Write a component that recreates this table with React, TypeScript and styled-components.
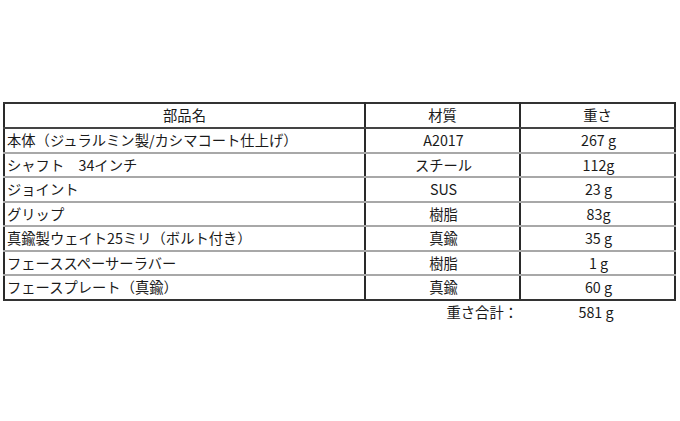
import React from "react";
import styled, { createGlobalStyle } from "styled-components";

const GlobalStyle = createGlobalStyle`
  html, body {
    margin: 0;
    padding: 0;
    background: #ffffff;
  }
  body {
    font-family: "Noto Sans CJK JP", "Noto Sans", sans-serif;
    color: #1a1a1a;
  }
`;

const Page = styled.div`
  width: 680px;
  height: 421px;
  box-sizing: border-box;
  padding: 102px 0 0 3px;
`;

const Table = styled.table`
  width: 671px;
  border-collapse: collapse;
  table-layout: fixed;
  font-size: 14.3px;
`;

const HeadCell = styled.th`
  height: 23px;
  padding: 0;
  font-weight: 400;
  text-align: center;
  border-top: 2px solid #333;
  border-bottom: 2px solid #444;
  border-left: 2px solid #2a2a2a;
  border-right: 2px solid #2a2a2a;
  line-height: 1;
`;

const Cell = styled.td<{ $align?: "left" | "center" }>`
  height: 22.5px;
  padding: 0 0 0 2px;
  text-align: ${(p) => p.$align ?? "center"};
  border-left: 2px solid #2a2a2a;
  border-right: 2px solid #2a2a2a;
  border-bottom: 2px solid #a8a8a8;
  white-space: nowrap;
  line-height: 1;
`;

const Row = styled.tr`
  &:last-child td {
    border-bottom: 2px solid #333;
  }
`;

const TotalRow = styled.div`
  display: grid;
  grid-template-columns: 361px 154px 156px;
  height: 22px;
  align-items: center;
  font-size: 14.3px;
`;

const TotalLabel = styled.span`
  grid-column: 2;
  text-align: right;
`;

const TotalValue = styled.span`
  text-align: center;
`;

const parts = [
  { name: "本体（ジュラルミン製/カシマコート仕上げ）", material: "A2017", weight: "267 g" },
  { name: "シャフト　34インチ", material: "スチール", weight: "112g" },
  { name: "ジョイント", material: "SUS", weight: "23 g" },
  { name: "グリップ", material: "樹脂", weight: "83g" },
  { name: "真鍮製ウェイト25ミリ（ボルト付き）", material: "真鍮", weight: "35 g" },
  { name: "フェーススペーサーラバー", material: "樹脂", weight: "1 g" },
  { name: "フェースプレート（真鍮）", material: "真鍮", weight: "60 g" },
];

export default function App() {
  return (
    <Page>
      <GlobalStyle />
      <Table>
        <colgroup>
          <col style={{ width: 361 }} />
          <col style={{ width: 155 }} />
          <col style={{ width: 155 }} />
        </colgroup>
        <thead>
          <tr>
            <HeadCell>部品名</HeadCell>
            <HeadCell>材質</HeadCell>
            <HeadCell>重さ</HeadCell>
          </tr>
        </thead>
        <tbody>
          {parts.map((p) => (
            <Row key={p.name}>
              <Cell $align="left">{p.name}</Cell>
              <Cell>{p.material}</Cell>
              <Cell>{p.weight}</Cell>
            </Row>
          ))}
        </tbody>
      </Table>
      <TotalRow>
        <TotalLabel>重さ合計：</TotalLabel>
        <TotalValue>581 g</TotalValue>
      </TotalRow>
    </Page>
  );
}
